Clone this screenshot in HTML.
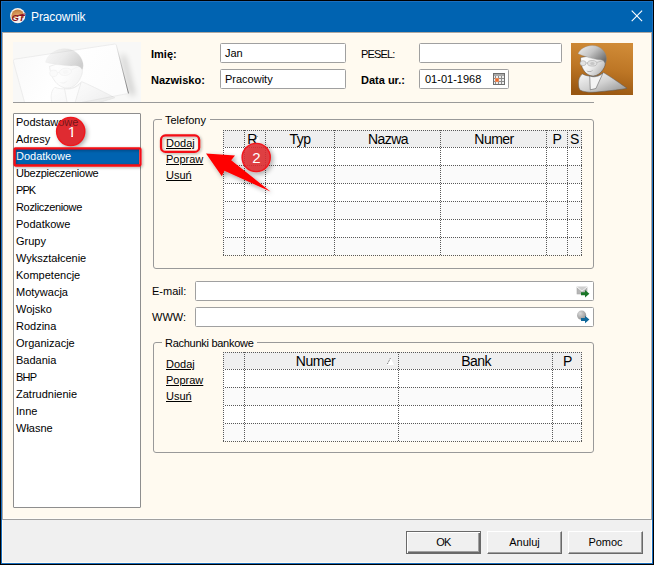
<!DOCTYPE html>
<html lang="pl">
<head>
<meta charset="utf-8">
<title>Pracownik</title>
<style>
html,body{margin:0;padding:0;}
body{width:654px;height:565px;overflow:hidden;background:#000;position:relative;font-family:"Liberation Sans","DejaVu Sans",sans-serif;font-size:11px;color:#000;}
.abs{position:absolute;}
#blue{left:1px;top:1px;width:652px;height:563px;background:#0063b1;box-sizing:border-box;border:1px solid #1a6fc0;}
#client{left:2px;top:32px;width:650px;height:531px;background:#fffaf0;}
#panel{left:2px;top:32px;width:650px;height:488px;box-sizing:border-box;border:1px solid #b0a8a0;border-bottom-color:#a0a0a0;box-shadow:inset 0 0 0 1px #fffdf8;}
#title{left:31px;top:9px;font-size:12px;line-height:16px;color:#fff;letter-spacing:-0.1px;}
#footer{left:3px;top:520px;width:648px;height:42px;background:#f0f0f0;}
#footline{left:2px;top:519px;width:650px;height:1px;background:#a0a0a0;}
.lbl{line-height:13px;white-space:nowrap;}
.b{font-weight:bold;}
.inp{box-sizing:border-box;background:#fff;border:1px solid #a0a0a0;border-radius:1.5px;height:20px;line-height:18px;padding-left:5px;white-space:nowrap;}
#hr{left:13px;top:102px;width:581px;height:1px;background:#9a9a9a;}
#list{left:13px;top:113px;width:128px;height:395px;box-sizing:border-box;background:#fff;border:1px solid #8e8e8e;border-radius:1px;}
#listtext{left:14px;top:114px;width:126px;height:393px;}
#listtext div{position:absolute;left:2px;height:17px;line-height:16px;white-space:nowrap;}
#sel{left:15px;top:148px;width:124px;height:17px;background:#0063b1;}
.grp{box-sizing:border-box;border:1px solid #999;border-radius:3px;}
.grp span{position:absolute;left:8px;top:-7px;background:#fffaf0;padding:0 4px 0 3px;line-height:14px;white-space:nowrap;}
.lnk{text-decoration:underline;line-height:13px;white-space:nowrap;}
.btn{box-sizing:border-box;width:75px;height:23px;background:#f0f0f0;text-align:center;line-height:21px;border:1px solid;border-color:#fff #696969 #696969 #fff;box-shadow:inset -1px -1px 0 #a0a0a0;}
.btn.def{border-color:#696969;box-shadow:inset 1px 1px 0 #fff, inset -1px -1px 0 #696969, inset -2px -2px 0 #a0a0a0;}
.hd{font-size:14px;letter-spacing:-0.55px;}
</style>
</head>
<body>
<svg width="0" height="0" style="position:absolute">
<defs>
<linearGradient id="bodyg" x1="0" y1="0" x2="1" y2="1"><stop offset="0" stop-color="#fafafa"/><stop offset="0.5" stop-color="#d2d2d2"/><stop offset="1" stop-color="#8e8e8e"/></linearGradient>
<linearGradient id="faceg" x1="0" y1="0" x2="1" y2="0.6"><stop offset="0" stop-color="#ffffff"/><stop offset="0.55" stop-color="#efefef"/><stop offset="1" stop-color="#b8b8b8"/></linearGradient>
<linearGradient id="hairg" x1="0" y1="0" x2="1" y2="0.7"><stop offset="0" stop-color="#f2f2f2"/><stop offset="0.5" stop-color="#c4c4c4"/><stop offset="1" stop-color="#6e6e6e"/></linearGradient>
<linearGradient id="orng" x1="0.62" y1="0" x2="0.45" y2="1"><stop offset="0" stop-color="#d08b37"/><stop offset="0.5" stop-color="#bd7625"/><stop offset="1" stop-color="#985611"/></linearGradient>
<symbol id="person" viewBox="0 0 62 52">
<path d="M11.5 31C8.4 33 7.3 37 7.5 41C7.6 44 8 46.3 9.5 47.2C14 49.6 22 49.6 30 48.6C40 47.6 50 46.6 56 45.3C50 41 40 34 32.5 29.5C28 33 24 34 21 33.5C17 33 14 32.5 11.5 31Z" fill="url(#bodyg)" stroke="#5a5a5a" stroke-width="0.5"/>
<path d="M18.7 33L19.3 46.8L24.9 45.5L31.9 30.2C28 33.6 23 34.6 18.7 33Z" fill="#f3f3f3" stroke="#4a4a4a" stroke-width="0.5"/>
<path d="M9.6 14.5C9.5 19 10.5 24 12.5 27C15 31 19 33.2 22.4 33C26 32.8 30 30 32 26.5C33.5 24.5 34.8 21.5 34 18.5L30 15L18 13Z" fill="url(#faceg)" stroke="#4a4a4a" stroke-width="0.5"/>
<path d="M7 10.8C9 6 15 2.3 21.5 2.5C29 2.7 35 8 35.5 15.5C35.6 17.5 35 19.5 34.2 20.5C33 18 31.5 17 29.5 16.8C25 16.5 21 15.5 17 14.3C13 13 9.5 12 7 10.8Z" fill="url(#hairg)" stroke="#8a8a8a" stroke-width="0.3"/>
<ellipse cx="12" cy="20.2" rx="3" ry="2.5" fill="#e2e2e2" stroke="#9a9a9a" stroke-width="0.5"/>
<ellipse cx="21.2" cy="20.3" rx="4.7" ry="2.8" fill="#e0e0e0" stroke="#9a9a9a" stroke-width="0.5"/>
<ellipse cx="21.4" cy="20.4" rx="2.2" ry="1.5" fill="#c6c6c6"/>
<path d="M15 20H16.5M25.9 19.4L32.5 17.5" stroke="#a4a4a4" stroke-width="0.6" fill="none"/>
<path d="M15.5 27.4C17.5 28.6 20 28.3 22 26.9C20.3 29.6 17 29.6 15.5 27.4Z" fill="#a6a6a6"/>
</symbol>
<filter id="sh" x="-30%" y="-30%" width="170%" height="170%"><feGaussianBlur in="SourceAlpha" stdDeviation="2.6"/><feOffset dx="2" dy="2"/><feComponentTransfer><feFuncA type="linear" slope="0.38"/></feComponentTransfer><feMerge><feMergeNode/><feMergeNode in="SourceGraphic"/></feMerge></filter>
<filter id="sh2" x="-10%" y="-30%" width="120%" height="170%"><feGaussianBlur in="SourceAlpha" stdDeviation="1.5"/><feOffset dx="1" dy="1"/><feComponentTransfer><feFuncA type="linear" slope="0.35"/></feComponentTransfer><feMerge><feMergeNode/><feMergeNode in="SourceGraphic"/></feMerge></filter>
</defs></svg>
<div id="blue" class="abs"></div>
<div id="client" class="abs"></div>
<div id="panel" class="abs"></div>
<div id="title" class="abs">Pracownik</div>
<svg class="abs" style="left:9px;top:7px" width="18" height="18" viewBox="0 0 18 18">
<defs><radialGradient id="gtg" cx="0.5" cy="0.75" r="0.7"><stop offset="0" stop-color="#e2a86c"/><stop offset="1" stop-color="#b46c2a"/></radialGradient><clipPath id="gtc"><circle cx="8.7" cy="8.7" r="6.3"/></clipPath></defs>
<circle cx="8.7" cy="8.7" r="7.6" fill="#f6f1ec"/>
<rect x="0" y="0" width="18" height="11" fill="url(#gtg)" clip-path="url(#gtc)"/>
<path d="M2.2 12.6L16.6 6.1L16.4 7L9 12.8Z" fill="#f6f1ec"/>
<path d="M8 8.2L16.6 6.2L15.8 7.4L8.4 9Z" fill="#8a1020"/>
<text x="2.4" y="13.6" font-family="Liberation Sans, sans-serif" font-size="8.6" font-weight="bold" font-style="italic" fill="#8a1020" textLength="13" lengthAdjust="spacingAndGlyphs">GT</text>
</svg>
<svg class="abs" style="left:631px;top:10px" width="12" height="12" viewBox="0 0 12 12"><path d="M0.7 0.7L11.1 11.1M11.1 0.7L0.7 11.1" stroke="#fff" stroke-width="1.1" fill="none"/></svg>

<div id="footer" class="abs"></div>

<svg class="abs" style="left:13px;top:42px" width="128" height="60" viewBox="0 0 128 60">
<defs>
<linearGradient id="cardg" x1="0" y1="0" x2="1" y2="0.3"><stop offset="0" stop-color="#f9f9f9"/><stop offset="0.5" stop-color="#ffffff"/><stop offset="1" stop-color="#fcfcfc"/></linearGradient>
<linearGradient id="edgeg" x1="0" y1="0" x2="0" y2="1"><stop offset="0" stop-color="#9a9a9a" stop-opacity="0"/><stop offset="0.4" stop-color="#8a8a8a" stop-opacity="0.55"/><stop offset="1" stop-color="#6a6a6a" stop-opacity="0.95"/></linearGradient>
<filter id="cblur" x="-50%" y="-20%" width="200%" height="140%"><feGaussianBlur stdDeviation="3"/></filter>
<clipPath id="cardclip"><path d="M0.4 18.6L103 2L115.5 51.4L40 66L12.3 63Z"/></clipPath>
<clipPath id="imgclip"><rect width="128" height="60"/></clipPath>
</defs>
<rect width="128" height="60" fill="#f8f8f7"/>
<g clip-path="url(#imgclip)"><path d="M108 12L117 52L122 54L112 14Z" fill="#000" opacity="0.22" filter="url(#cblur)"/></g>
<path d="M1.4 17.2Q0 18 0.4 19.6L12.3 63L40 66L115.5 51.4L103.3 3Q102.8 1.8 101.5 2.1Z" fill="url(#cardg)" stroke="#e6e6e6" stroke-width="0.7"/>
<g clip-path="url(#imgclip)" opacity="0.13"><g transform="translate(21.5 7.5) rotate(-8)"><use href="#person" x="0" y="0" width="80.6" height="67.6"/></g></g>
<g clip-path="url(#imgclip)" opacity="0.22"><path transform="translate(21.5 7.5) rotate(-8) scale(1.3)" d="M7 10.8C9 6 15 2.3 21.5 2.5C29 2.7 35 8 35.5 15.5C35.6 17.5 35 19.5 34.2 20.5C33 18 31.5 17 29.5 16.8C25 16.5 21 15.5 17 14.3C13 13 9.5 12 7 10.8Z" fill="url(#hairg)"/></g>
<path d="M103.2 2.5L115.5 51.4" stroke="url(#edgeg)" stroke-width="0.9" fill="none"/>
</svg>

<div class="abs lbl b" style="left:151px;top:48px;">Imię:</div>
<div class="abs lbl b" style="left:151px;top:74px;">Nazwisko:</div>
<div class="abs inp" style="left:220px;top:43px;width:126px;padding-left:4px;">Jan</div>
<div class="abs inp" style="left:220px;top:69px;width:126px;padding-left:4px;">Pracowity</div>
<div class="abs lbl" style="left:361px;top:48px;letter-spacing:-0.85px;">PESEL:</div>
<div class="abs lbl b" style="left:361px;top:74px;">Data ur.:</div>
<div class="abs inp" style="left:419px;top:43px;width:143px;"></div>
<div class="abs inp" style="left:419px;top:69px;width:90px;">01-01-1968</div>
<svg class="abs" style="left:493px;top:73px" width="12" height="12" viewBox="0 0 12 12" shape-rendering="crispEdges">
<rect width="12" height="12" fill="#6e6e6e"/>
<rect x="1" y="1" width="10" height="2" fill="#a8a8a8"/>
<rect x="1" y="3" width="10" height="8" fill="#8c8c8c"/>
<g fill="#ececec"><rect x="1" y="3" width="1" height="2"/><rect x="3" y="3" width="2" height="2"/><rect x="6" y="3" width="2" height="2"/><rect x="9" y="3" width="2" height="2"/>
<rect x="1" y="6" width="1" height="2"/><rect x="6" y="6" width="2" height="2"/><rect x="9" y="6" width="2" height="2"/>
<rect x="1" y="9" width="1" height="2"/><rect x="3" y="9" width="2" height="2"/><rect x="6" y="9" width="2" height="2"/><rect x="9" y="9" width="2" height="2"/></g>
<rect x="2" y="5" width="4" height="4" fill="#e98a5c"/><rect x="3" y="6" width="2" height="2" fill="#f06a2a"/>
</svg>

<svg class="abs" style="left:571px;top:43px" width="62" height="52" viewBox="0 0 62 52">
<rect width="62" height="52" fill="url(#orng)"/>
<use href="#person" x="0" y="0" width="62" height="52"/>
</svg>

<div id="hr" class="abs"></div>

<div id="list" class="abs"></div>
<div id="sel" class="abs"></div>
<svg class="abs" style="left:0;top:0;pointer-events:none" width="160" height="160" viewBox="0 0 160 160"><g filter="url(#sh)"><circle cx="70.7" cy="131.5" r="14.1" fill="#df2c30"/></g></svg>
<div id="listtext" class="abs">
<div style="top:0px">Podstawowe</div>
<div style="top:17px">Adresy</div>
<div style="top:34px;color:#fff">Dodatkowe</div>
<div style="top:51px" ><span style="letter-spacing:-0.25px">Ubezpieczeniowe</span></div>
<div style="top:68px"><span style="letter-spacing:-0.9px">PPK</span></div>
<div style="top:85px"><span style="letter-spacing:-0.33px">Rozliczeniowe</span></div>
<div style="top:102px">Podatkowe</div>
<div style="top:119px">Grupy</div>
<div style="top:136px">Wykształcenie</div>
<div style="top:153px">Kompetencje</div>
<div style="top:170px">Motywacja</div>
<div style="top:187px">Wojsko</div>
<div style="top:204px">Rodzina</div>
<div style="top:221px">Organizacje</div>
<div style="top:238px">Badania</div>
<div style="top:255px"><span style="letter-spacing:-0.8px">BHP</span></div>
<div style="top:272px">Zatrudnienie</div>
<div style="top:289px">Inne</div>
<div style="top:306px">Własne</div>
</div>


<div class="abs grp" style="left:153px;top:119px;width:441px;height:150px;"><span>Telefony</span></div>
<div class="abs lnk" style="left:166px;top:137px;">Dodaj</div>
<div class="abs lnk" style="left:166px;top:153px;">Popraw</div>
<div class="abs lnk" style="left:166px;top:169px;">Usuń</div>
<svg class="abs" style="left:223px;top:130px;" width="359" height="126" viewBox="0 0 359 126" shape-rendering="crispEdges"><rect x="0" y="0" width="359" height="17" fill="#efefef"/><rect x="0" y="17" width="359" height="18" fill="#ffffff"/><rect x="0" y="35" width="359" height="18" fill="#fafafa"/><rect x="0" y="53" width="359" height="18" fill="#ffffff"/><rect x="0" y="71" width="359" height="18" fill="#fafafa"/><rect x="0" y="89" width="359" height="18" fill="#ffffff"/><rect x="0" y="107" width="359" height="18" fill="#fafafa"/><path d="M0 0.5H359M0 125.5H359" stroke="#585858" stroke-width="1" stroke-dasharray="1 1" fill="none"/><path d="M1 17.5H359M1 35.5H359M1 53.5H359M1 71.5H359M1 89.5H359M1 107.5H359" stroke="#585858" stroke-width="1" stroke-dasharray="1 1" stroke-dashoffset="1" fill="none"/><path d="M0.5 0V126M21.5 0V126M42.5 0V126M111.5 0V126M217.5 0V126M323.5 0V126M344.5 0V126M358.5 0V126" stroke="#585858" stroke-width="1" stroke-dasharray="1 1" fill="none"/></svg>
<svg class="abs" style="left:253px;top:135px" width="9" height="9" viewBox="0 0 9 9"><path d="M4.6 1L8 8H1Z" fill="#fff"/><path d="M4.4 1.2L1.1 7.6" stroke="#555" stroke-width="0.9" stroke-dasharray="1 0.8" fill="none"/></svg>
<div class="abs hd" style="left:245px;top:131px;width:20px;height:16px;line-height:16px;text-align:center;white-space:nowrap;text-indent:-6px;">R</div>
<div class="abs hd" style="left:266px;top:131px;width:68px;height:16px;line-height:16px;text-align:center;white-space:nowrap;">Typ</div>
<div class="abs hd" style="left:335px;top:131px;width:106px;height:16px;line-height:16px;text-align:center;white-space:nowrap;">Nazwa</div>
<div class="abs hd" style="left:442px;top:131px;width:104px;height:16px;line-height:16px;text-align:center;white-space:nowrap;">Numer</div>
<div class="abs hd" style="left:547px;top:131px;width:20px;height:16px;line-height:16px;text-align:center;white-space:nowrap;">P</div>
<div class="abs hd" style="left:568px;top:131px;width:13px;height:16px;line-height:16px;text-align:center;white-space:nowrap;">S</div>


<div class="abs lbl" style="left:152px;top:285px;">E-mail:</div>
<div class="abs lbl" style="left:152px;top:311px;">WWW:</div>
<div class="abs inp" style="left:195px;top:281px;width:399px;"></div>
<div class="abs inp" style="left:195px;top:307px;width:399px;"></div>
<svg class="abs" style="left:576px;top:285px" width="14" height="13" viewBox="0 0 14 13">
<rect x="1" y="2" width="10" height="7" fill="#b6b6b6" stroke="#a8a8a8" stroke-width="0.6"/>
<path d="M1 2L6 6.2L11 2" fill="#cfcfcf" stroke="#fafafa" stroke-width="0.9"/>
<path d="M5 7.2H9V4.9L13.4 8.7L9 12.5V10.2H5Z" fill="#1a7528"/>
</svg>
<svg class="abs" style="left:576px;top:310px" width="14" height="14" viewBox="0 0 14 14">
<defs><radialGradient id="glb" cx="0.35" cy="0.3" r="0.8"><stop offset="0" stop-color="#d8d8d8"/><stop offset="1" stop-color="#8c8c8c"/></radialGradient></defs>
<circle cx="5.6" cy="5.2" r="4.6" fill="url(#glb)"/>
<path d="M5 8H9V5.7L13.4 9.5L9 13.3V11H5Z" fill="#10689a"/>
</svg>


<div class="abs grp" style="left:153px;top:342px;width:441px;height:111px;"><span style="letter-spacing:-0.28px;top:-7px">Rachunki bankowe</span></div>
<div class="abs lnk" style="left:166px;top:358px;">Dodaj</div>
<div class="abs lnk" style="left:166px;top:374px;">Popraw</div>
<div class="abs lnk" style="left:166px;top:390px;">Usuń</div>
<svg class="abs" style="left:223px;top:352px;" width="359" height="90" viewBox="0 0 359 90" shape-rendering="crispEdges"><rect x="0" y="0" width="359" height="17" fill="#efefef"/><rect x="0" y="17" width="359" height="18" fill="#ffffff"/><rect x="0" y="35" width="359" height="18" fill="#fafafa"/><rect x="0" y="53" width="359" height="18" fill="#ffffff"/><rect x="0" y="71" width="359" height="18" fill="#fafafa"/><path d="M0 0.5H359M0 89.5H359" stroke="#585858" stroke-width="1" stroke-dasharray="1 1" fill="none"/><path d="M1 17.5H359M1 35.5H359M1 53.5H359M1 71.5H359" stroke="#585858" stroke-width="1" stroke-dasharray="1 1" stroke-dashoffset="1" fill="none"/><path d="M0.5 0V90M21.5 0V90M175.5 0V90M329.5 0V90M358.5 0V90" stroke="#585858" stroke-width="1" stroke-dasharray="1 1" fill="none"/></svg>
<svg class="abs" style="left:386px;top:357px" width="9" height="9" viewBox="0 0 9 9"><path d="M4.6 1L8 8H1Z" fill="#fff"/><path d="M4.4 1.2L1.1 7.6" stroke="#555" stroke-width="0.9" stroke-dasharray="1 0.8" fill="none"/></svg>
<div class="abs hd" style="left:239px;top:353px;width:153px;height:16px;line-height:16px;text-align:center;white-space:nowrap;">Numer</div>
<div class="abs hd" style="left:399px;top:353px;width:154px;height:16px;line-height:16px;text-align:center;white-space:nowrap;">Bank</div>
<div class="abs hd" style="left:554px;top:353px;width:27px;height:16px;line-height:16px;text-align:center;white-space:nowrap;">P</div>


<div class="abs btn def" style="left:406px;top:531px;letter-spacing:-0.7px;">OK</div>
<div class="abs btn" style="left:487px;top:531px;">Anuluj</div>
<div class="abs btn" style="left:568px;top:531px;">Pomoc</div>

<svg class="abs" style="left:0;top:0;z-index:5;pointer-events:none" width="654" height="565" viewBox="0 0 654 565">
<rect x="14.6" y="148.3" width="125.8" height="17.2" rx="0.9" fill="none" stroke="#f40a12" stroke-width="2.3" filter="url(#sh2)"/>
<rect x="161" y="135.4" width="38.2" height="16.5" rx="4.5" fill="none" stroke="#f40a12" stroke-width="2.2" filter="url(#sh2)"/>
<path d="M206 153.5L235 155.4L231.2 160.2L270.4 191.6L224.4 170.8L221.8 176.2Z" fill="#ff0000" filter="url(#sh)"/>
<circle cx="70.7" cy="131.5" r="14.1" fill="#df2c30" fill-opacity="0.5" stroke="#f2161c" stroke-width="1.4"/>
<clipPath id="oneclip"><path d="M64 124H78V135.72H72.95V138H71.2V135.72H64Z"/></clipPath>
<text x="71.8" y="136.9" font-family="Liberation Sans, sans-serif" font-size="15" fill="#fff" text-anchor="middle" clip-path="url(#oneclip)">1</text>
<g filter="url(#sh)"><circle cx="256.2" cy="157.5" r="14.1" fill="#df2c30" fill-opacity="0.87" stroke="#f2161c" stroke-width="1.4"/></g>
<text x="256.4" y="162.9" font-family="Liberation Sans, sans-serif" font-size="15" fill="#fff" text-anchor="middle">2</text>
</svg>

</body>
</html>
